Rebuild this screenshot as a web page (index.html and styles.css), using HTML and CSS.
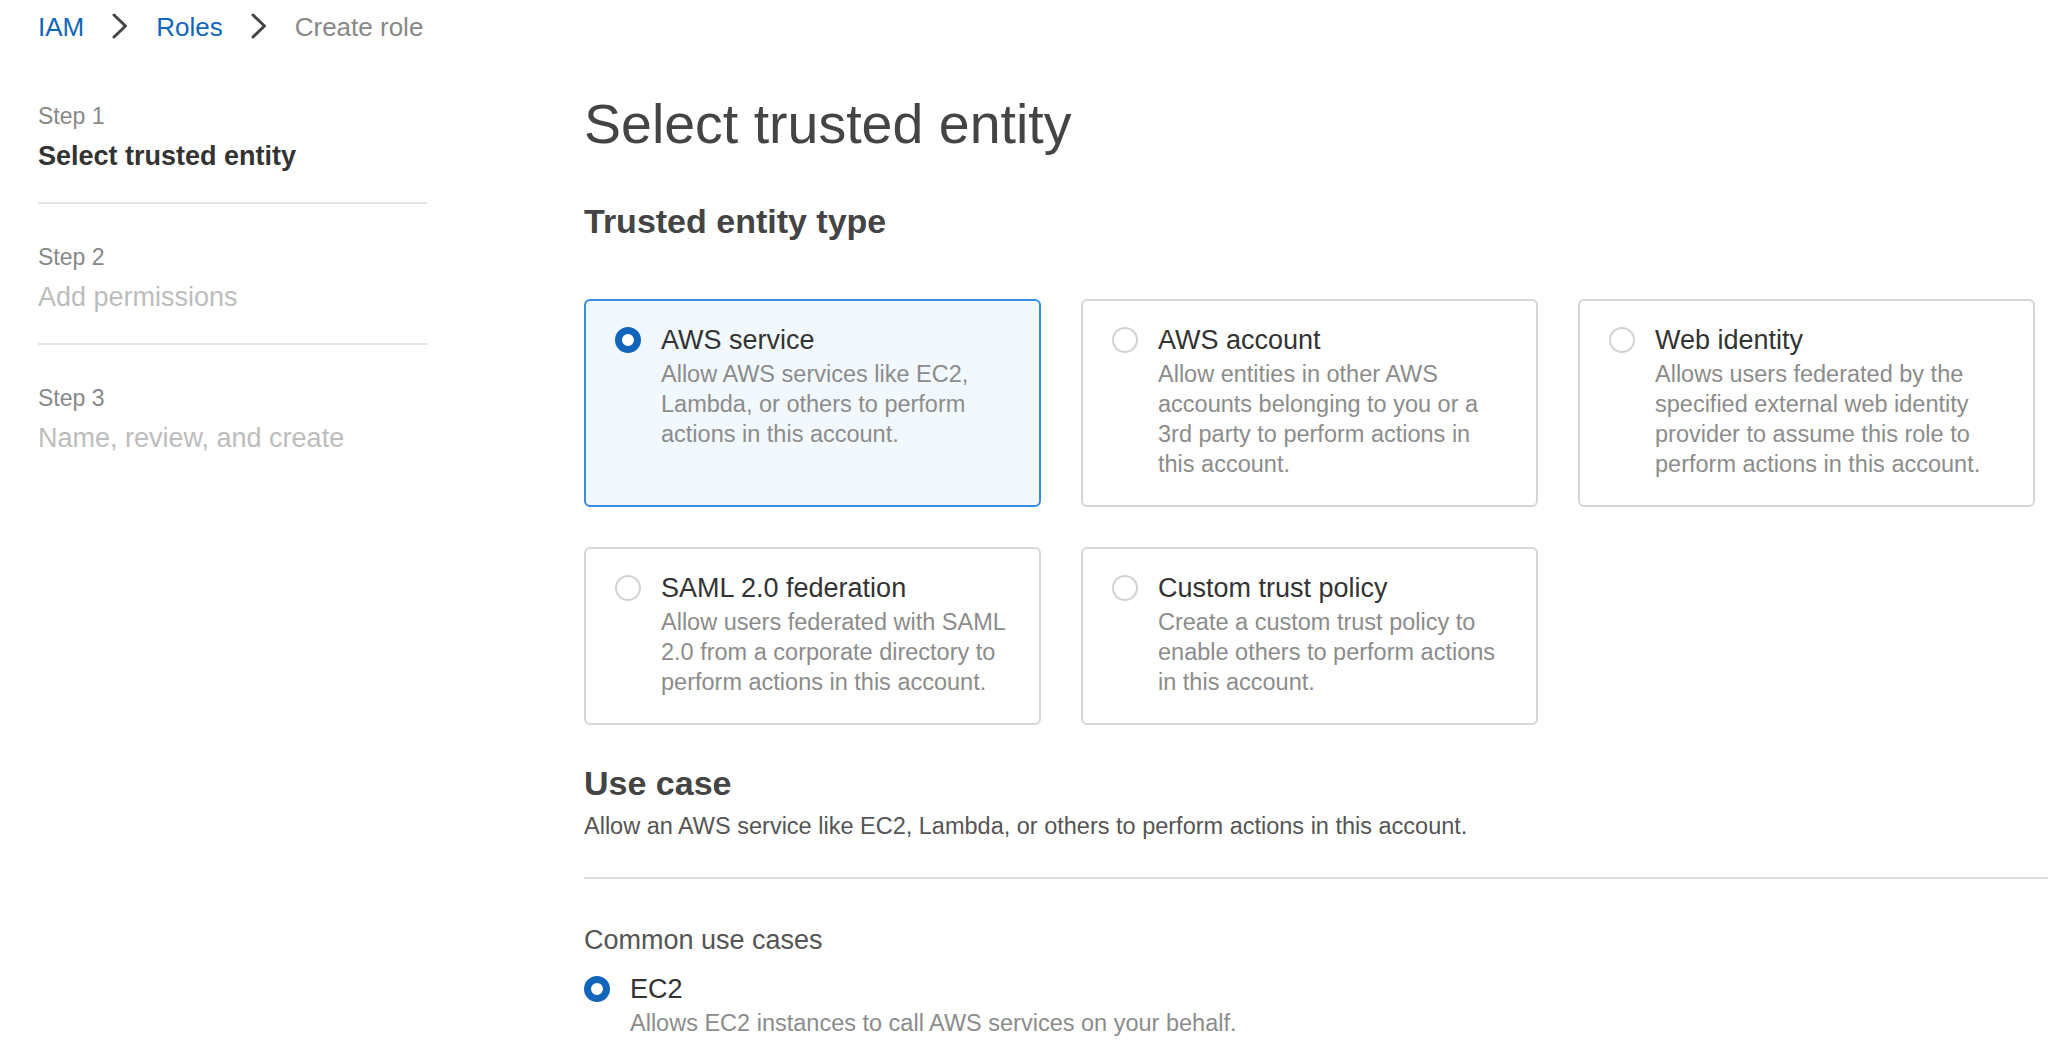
FILE: index.html
```html
<!DOCTYPE html>
<html lang="en">
<head>
<meta charset="utf-8">
<title>Create role</title>
<link rel="stylesheet" href="styles.css">
</head>
<body>
<div class="page">
  <nav class="crumbs">
    <a class="crumb-link">IAM</a>
    <svg class="chev" viewBox="0 0 16 26"><polyline points="2,2 13.5,13 2,24"/></svg>
    <a class="crumb-link">Roles</a>
    <svg class="chev" viewBox="0 0 16 26"><polyline points="2,2 13.5,13 2,24"/></svg>
    <span class="crumb-current">Create role</span>
  </nav>

  <div class="layout">
    <aside class="steps">
      <div class="step">
        <div class="step-label">Step 1</div>
        <div class="step-title active">Select trusted entity</div>
      </div>
      <div class="step">
        <div class="step-label">Step 2</div>
        <div class="step-title">Add permissions</div>
      </div>
      <div class="step last">
        <div class="step-label">Step 3</div>
        <div class="step-title">Name, review, and create</div>
      </div>
    </aside>

    <main class="content">
      <h1 class="page-title">Select trusted entity</h1>
      <h2 class="section-title type-title">Trusted entity type</h2>

      <div class="tiles">
        <div class="tile selected">
          <span class="radio checked"></span>
          <div class="tile-text">
            <div class="tile-title">AWS service</div>
            <div class="tile-desc">Allow AWS services like EC2, Lambda, or others to perform actions in this account.</div>
          </div>
        </div>
        <div class="tile">
          <span class="radio"></span>
          <div class="tile-text">
            <div class="tile-title">AWS account</div>
            <div class="tile-desc">Allow entities in other AWS accounts belonging to you or a 3rd party to perform actions in this account.</div>
          </div>
        </div>
        <div class="tile">
          <span class="radio"></span>
          <div class="tile-text">
            <div class="tile-title">Web identity</div>
            <div class="tile-desc">Allows users federated by the specified external web identity provider to assume this role to perform actions in this account.</div>
          </div>
        </div>
        <div class="tile">
          <span class="radio"></span>
          <div class="tile-text">
            <div class="tile-title">SAML 2.0 federation</div>
            <div class="tile-desc">Allow users federated with SAML 2.0 from a corporate directory to perform actions in this account.</div>
          </div>
        </div>
        <div class="tile">
          <span class="radio"></span>
          <div class="tile-text">
            <div class="tile-title">Custom trust policy</div>
            <div class="tile-desc">Create a custom trust policy to enable others to perform actions in this account.</div>
          </div>
        </div>
      </div>

      <h2 class="section-title use-title">Use case</h2>
      <p class="use-desc">Allow an AWS service like EC2, Lambda, or others to perform actions in this account.</p>
      <div class="rule"></div>

      <div class="common-label">Common use cases</div>
      <div class="option">
        <span class="radio checked"></span>
        <div class="option-text">
          <div class="option-title">EC2</div>
          <div class="option-desc">Allows EC2 instances to call AWS services on your behalf.</div>
        </div>
      </div>
    </main>
  </div>
</div>
</body>
</html>
```

FILE: styles.css
```css
* { box-sizing: border-box; }

html, body {
  margin: 0;
  padding: 0;
  background: #ffffff;
}

body {
  font-family: "Liberation Sans", Arial, Helvetica, sans-serif;
  color: #333333;
  overflow: hidden;
}

.page {
  padding: 9px 13px 0 38px;
}

/* Breadcrumbs */
.crumbs {
  display: flex;
  align-items: center;
  gap: 28px;
  font-size: 26px;
  line-height: 36px;
  height: 36px;
}

.crumb-link {
  color: #1166bb;
  text-decoration: none;
}

.crumb-current {
  color: #888888;
}

.chev {
  width: 16px;
  height: 26px;
  margin-top: -3px;
}

.chev polyline {
  fill: none;
  stroke: #444444;
  stroke-width: 3;
  stroke-linecap: round;
  stroke-linejoin: round;
}

/* Main layout */
.layout {
  display: flex;
  margin-top: 47px;
}

.steps {
  width: 389px;
  flex-shrink: 0;
  padding-top: 9px;
}

.step {
  padding-bottom: 26px;
  border-bottom: 2px solid #e4e4e4;
  margin-bottom: 38px;
}

.step.last {
  border-bottom: none;
  margin-bottom: 0;
}

.step-label {
  font-size: 23px;
  line-height: 30px;
  color: #888888;
}

.step-title {
  margin-top: 5px;
  font-size: 27px;
  line-height: 40px;
  color: #bdbdbd;
}

.step-title.active {
  color: #333333;
  font-weight: bold;
}

.content {
  flex: 1;
  margin-left: 157px;
  min-width: 0;
}

.page-title {
  margin: 0;
  font-size: 55.5px;
  line-height: 64px;
  font-weight: normal;
  color: #444444;
}

.section-title {
  margin: 0;
  font-size: 34px;
  line-height: 44px;
  font-weight: bold;
  color: #444444;
}

.type-title {
  margin-top: 43px;
}

/* Tiles */
.tiles {
  margin-top: 56px;
  display: grid;
  grid-template-columns: repeat(3, 1fr);
  gap: 40px;
}

.tile {
  display: flex;
  align-items: flex-start;
  gap: 20px;
  border: 2px solid #d6d6d6;
  border-radius: 6px;
  padding: 20px 28px 26px 29px;
  background: #ffffff;
}

.tile.selected {
  border-color: #3a8ce2;
  background: #f1f8fe;
}

.radio {
  flex-shrink: 0;
  width: 26px;
  height: 26px;
  border-radius: 50%;
  border: 2px solid #d2d2d2;
  background: #ffffff;
  margin-top: 6px;
}

.radio.checked {
  border: 7px solid #1166bb;
}

.tile-text {
  flex: 1;
  min-width: 0;
}

.tile-title {
  font-size: 27px;
  line-height: 38px;
  color: #333333;
}

.tile-desc {
  font-size: 23.5px;
  line-height: 30px;
  color: #8c8c8c;
}

/* Use case */
.use-title {
  margin-top: 36px;
}

.use-desc {
  margin: 6px 0 0 0;
  font-size: 23.5px;
  line-height: 30px;
  color: #555555;
}

.rule {
  margin-top: 36px;
  margin-right: -13px;
  height: 2px;
  background: #dedede;
}

.common-label {
  margin-top: 42px;
  font-size: 27px;
  line-height: 38px;
  color: #555555;
}

.option {
  margin-top: 11px;
  display: flex;
  align-items: flex-start;
  gap: 20px;
}

.option .radio {
  margin-top: 6px;
}

.option-title {
  font-size: 27px;
  line-height: 38px;
  color: #333333;
}

.option-desc {
  font-size: 23.5px;
  line-height: 30px;
  color: #8c8c8c;
}
```
